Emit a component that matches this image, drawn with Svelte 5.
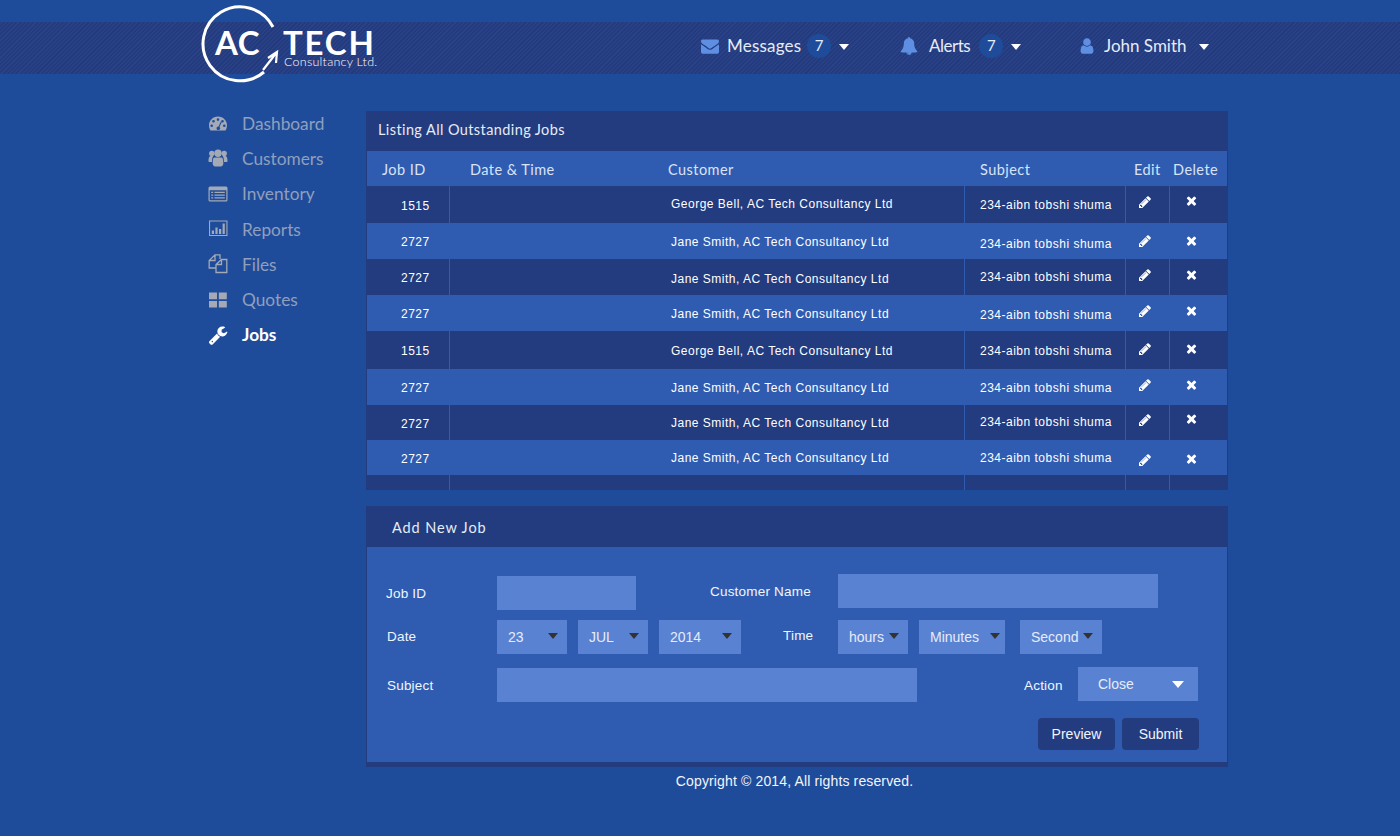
<script>
	const paths = {
		envelope: 'M1792 710v794q0 66-47 113t-113 47h-1472q-66 0-113-47t-47-113v-794q44 49 101 87 362 246 497 345 57 42 92.5 65.5t94.5 48 110 24.5h2q51 0 110-24.5t94.5-48 92.5-65.5q170-123 498-345 57-39 100-87zm0-294q0 79-49 151t-122 123q-376 261-468 325-10 7-42.5 30.5t-54 38-52 32.5-57.5 27-50 9h-2q-23 0-50-9t-57.5-27-52-32.5-54-38-42.5-30.5q-91-64-262-182.5t-205-142.5q-62-42-117-115.5t-55-136.5q0-78 41.5-130t118.5-52h1472q65 0 112.500 47t47.500 113z',
		bell: 'M912 1696q0-16-16-16-59 0-101.5-42.5t-42.500-101.500q0-16-16-16t-16 16q0 73 51.500 124.500t124.500 51.500q16 0 16-16zm816-288q0 52-38 90t-90 38h-448q0 106-75 181t-181 75-181-75-75-181h-448q-52 0-90-38t-38-90q50-42 91-88t85-119.500 74.500-158.500 50-206 19.500-260q0-152 117-282.500t307-158.500q-8-19-8-39 0-40 28-68t68-28 68 28 28 68q0 20-8 39 190 28 307 158.500t117 282.500q0 139 19.500 260t50 206 74.500 158.500 85 119.500 91 88z',
		user: 'M1536 1399q0 109-62.500 187t-150.500 78h-854q-88 0-150.500-78t-62.500-187q0-85 8.500-160.500t31.500-152 58.500-131 94-89 134.500-34.500q131 128 313 128t313-128q76 0 134.500 34.500t94 89 58.500 131 31.500 152 8.500 160.500zm-256-887q0 159-112.500 271.500t-271.500 112.500-271.500-112.500-112.500-271.500 112.500-271.500 271.500-112.500 271.500 112.500 112.500 271.500z',
		pencil: 'M491 1536l91-91-235-235-91 91v107h128v128h107zm523-928q0-22-22-22-10 0-17 7l-542 542q-7 7-7 17 0 22 22 22 10 0 17-7l542-542q7-7 7-17zm-54-192l416 416-832 832h-416v-416zm683 96q0 53-37 90l-166 166-416-416 166-165q36-38 90-38 53 0 91 38l235 234q37 39 37 91z',
		times: 'M1298 1214q0 40-28 68l-136 136q-28 28-68 28t-68-28l-294-294-294 294q-28 28-68 28t-68-28l-136-136q-28-28-28-68t28-68l294-294-294-294q-28-28-28-68t28-68l136-136q28-28 68-28t68 28l294 294 294-294q28-28 68-28t68 28l136 136q28 28 28 68t-28 68l-294 294 294 294q28 28 28 68z',
		wrench: 'M448 1472q0-26-19-45t-45-19-45 19-19 45 19 45 45 19 45-19 19-45zm644-420l-682 682q-37 37-90 37-52 0-91-37l-106-108q-38-36-38-90 0-53 38-91l681-681q39 98 114.500 173.500t173.500 114.500zm634-435q0 39-23 106-47 134-164.500 217.500t-258.500 83.500q-185 0-316.500-131.500t-131.500-316.500 131.500-316.500 316.500-131.500q58 0 121.500 16.500t107.500 46.500q16 11 16 28t-16 28l-293 169v224l193 107q5-3 79-48.500t135.500-81 70.500-35.500q15 0 23.500 10t8.500 25z'
	};

	const nav = [
		{ name: 'Dashboard', icon: 'dash' },
		{ name: 'Customers', icon: 'users' },
		{ name: 'Inventory', icon: 'list' },
		{ name: 'Reports', icon: 'chart' },
		{ name: 'Files', icon: 'files' },
		{ name: 'Quotes', icon: 'grid' },
		{ name: 'Jobs', icon: 'wrench', active: true }
	];

	const george = 'George Bell, AC Tech Consultancy Ltd';
	const jane = 'Jane Smith, AC Tech Consultancy Ltd';

	// c, s, i: how far the customer, subject and icons sit off the row's centre
	const jobs = [
		{ id: 1515, customer: george, h: 37, c: -1, s: 0, i: 0 },
		{ id: 2727, customer: jane, h: 36, c: 1, s: 3, i: 3 },
		{ id: 2727, customer: jane, h: 36, c: 2, s: 0, i: 1 },
		{ id: 2727, customer: jane, h: 36, c: 1, s: 2, i: 1 },
		{ id: 1515, customer: george, h: 38, c: 1, s: 1, i: 2 },
		{ id: 2727, customer: jane, h: 36, c: 1, s: 1, i: 1 },
		{ id: 2727, customer: jane, h: 35, c: 0, s: -1, i: 0 },
		{ id: 2727, customer: jane, h: 35, c: 0, s: 0, i: 5 }
	];

	const nudge = (n) => (n > 0 ? `padding-top: ${n * 2}px` : `padding-bottom: ${-n * 2}px`);
</script>

<div class="page">
	<header class="topbar">
		<div class="topbar-inner">
			<svg class="logo" viewBox="0 0 180 84" aria-label="AC Tech Consultancy Ltd.">
				<path d="M73 23 A37 37 0 1 0 64 68" fill="none" stroke="#fff" stroke-width="3" />
				<path d="M63 66 L77 48 M68 54 L77 48 L76 59" fill="none" stroke="#fff" stroke-width="2.200" />
				<text x="15" y="51" class="logo-big">AC</text>
				<text x="83" y="51" class="logo-big tech">TECH</text>
				<text x="84" y="62" class="logo-small">Consultancy Ltd.</text>
			</svg>
			<div class="usernav">
				<div class="navitem messages">
					<svg class="topicon" viewBox="0 0 1792 1792"><path d={paths.envelope} /></svg>
					<span class="navlabel">Messages</span>
					<span class="badge">7</span>
					<span class="caret"></span>
				</div>
				<div class="navitem alerts">
					<svg class="topicon" viewBox="0 0 1792 1792"><path d={paths.bell} /></svg>
					<span class="navlabel">Alerts</span>
					<span class="badge">7</span>
					<span class="caret"></span>
				</div>
				<div class="navitem profile">
					<svg class="topicon" viewBox="200 0 1392 1792"><path d={paths.user} /></svg>
					<span class="navlabel">John Smith</span>
					<span class="caret"></span>
				</div>
			</div>
		</div>
	</header>

	<div class="content">
		<nav class="sidebar">
			{#each nav as item}
				<div class="sidelink" class:active={item.active}>
					<svg class="sideicon" viewBox="0 0 20 20">
						{#if item.icon === 'dash'}
							<path fill-rule="evenodd" d="M10 2.500C4.800 2.500 1 6.600 1 11.300c0 2.200.7 3.900 1.500 5.200h15c.8-1.300 1.500-3 1.500-5.200 0-4.700-3.800-8.800-9-8.800zM10 4.300a1.300 1.300 0 1 1 0 2.600 1.300 1.300 0 0 1 0-2.600zM5.500 6a1.300 1.300 0 1 1 0 2.600 1.300 1.300 0 0 1 0-2.600zM14.500 6a1.300 1.300 0 1 1 0 2.600 1.300 1.300 0 0 1 0-2.600zM3.700 10.400a1.300 1.300 0 1 1 0 2.600 1.300 1.300 0 0 1 0-2.600zM16.300 10.400a1.300 1.300 0 1 1 0 2.600 1.300 1.300 0 0 1 0-2.600zM12.800 7.500l.9.4-2.200 5a1.800 1.800 0 1 1-.9-.4z" />
						{:else if item.icon === 'users'}
							<circle cx="3.800" cy="4.500" r="2.700" /><circle cx="16.200" cy="4.500" r="2.700" /><circle cx="10" cy="4.200" r="3.700" />
							<path d="M.5 12c0-3 .6-4.800 2-5h2.800C4.300 8.500 4 10.500 4 13H1.200C.8 13 .5 12.500.5 12zM19.500 12c0-3-.6-4.800-2-5h-2.800c1 1.500 1.300 3.500 1.300 6h2.800c.4 0 .7-.5.700-1z" />
							<path d="M6.500 8.500h7c1.500 0 1.800 3 1.800 6 0 1.500-1 3-2.500 3H7.200c-1.500 0-2.500-1.500-2.500-3 0-3 .3-6 1.800-6z" />
						{:else if item.icon === 'list'}
							<path fill-rule="evenodd" d="M2 2.500h16a1.500 1.500 0 0 1 1.500 1.500v12A1.500 1.500 0 0 1 18 17.500H2A1.500 1.500 0 0 1 .5 16V4A1.500 1.500 0 0 1 2 2.500zm-.3 3.800v9.700c0 .2.100.3.300.3h16c.2 0 .3-.1.300-.3V6.300zM3.200 7.800h2v1.300h-2zM6.500 7.800h10.300v1.300H6.500zM3.200 10.500h2v1.300h-2zM6.500 10.500h10.300v1.300H6.500zM3.200 13.200h2v1.300h-2zM6.500 13.200h10.300v1.300H6.500z" />
						{:else if item.icon === 'chart'}
							<path fill-rule="evenodd" d="M1 1.500h18.500v15.500H1zM2.100 2.600v13.300h16.300V2.600zM3.800 11.500h2.200v3.600H3.800zM7.400 8.500h2.200v6.600H7.400zM11 10h2.200v5.100H11zM14.600 4.500h2.200v10.600h-2.200z" />
						{:else if item.icon === 'files'}
							<path fill="none" stroke="currentColor" stroke-width="1.300" d="M12 5V.8H7L1.200 6.500V14H7.500M7 .8V6.500H1.200M13.500 5.500H18.800V18.500H8V10.500zM13.500 5.500V10.500H8" />
						{:else if item.icon === 'grid'}
							<path d="M1 2.500h8v6.800H1zM10.800 2.500h8v6.800h-8zM1 11h8v6.500H1zM10.800 11h8v6.500h-8z" />
						{:else}
							<path transform="scale(.0112)" d={paths.wrench} />
						{/if}
					</svg>
					<span>{item.name}</span>
				</div>
			{/each}
		</nav>

		<main class="main">
			<section class="panel list-panel">
				<h2 class="panel-title">Listing All Outstanding Jobs</h2>
				<div class="grid head">
					<span class="th job">Job ID</span>
					<span class="th date">Date &amp; Time</span>
					<span class="th cust">Customer</span>
					<span class="th subj">Subject</span>
					<span class="th edit">Edit</span>
					<span class="th del">Delete</span>
				</div>
				{#each jobs as job, i}
					<div class="grid row" class:light={i % 2 === 1} style="height: {job.h}px">
						<span class="td id">{job.id}</span>
						<span class="td date-cell"></span>
						<span class="td customer" style={nudge(job.c)}>{job.customer}</span>
						<span class="td subject" style={nudge(job.s)}>234-aibn tobshi shuma</span>
						<span class="td action edit-cell" style={nudge(job.i - 3)}>
							<svg class="rowicon" viewBox="0 0 1792 1792"><path d={paths.pencil} /></svg>
						</span>
						<span class="td action del-cell" style={nudge(job.i - 3)}>
							<svg class="rowicon" viewBox="0 200 1408 1408"><path d={paths.times} /></svg>
						</span>
					</div>
				{/each}
				<div class="grid row tail">
					<span class="td"></span><span class="td date-cell"></span><span class="td"></span>
					<span class="td"></span><span class="td"></span><span class="td"></span>
				</div>
			</section>

			<section class="panel form-panel">
				<h2 class="panel-title add">Add New Job</h2>
				<form class="form" onsubmit={(e) => e.preventDefault()}>
					<div class="frow one">
						<span class="lbl l-job">Job ID</span>
						<span class="field f-job"></span>
						<span class="lbl l-customer">Customer Name</span>
						<span class="field f-customer"></span>
					</div>
					<div class="frow two">
						<span class="lbl l-date">Date</span>
						<span class="field sel w70">23<i class="arrow"></i></span>
						<span class="field sel w70 gap11">JUL<i class="arrow"></i></span>
						<span class="field sel w82 gap11">2014<i class="arrow"></i></span>
						<span class="lbl l-time">Time</span>
						<span class="field sel w70">hours<i class="arrow"></i></span>
						<span class="field sel w86 gap11">Minutes<i class="arrow near"></i></span>
						<span class="field sel w82 gap15">Second<i class="arrow"></i></span>
					</div>
					<div class="frow three">
						<span class="lbl l-subject">Subject</span>
						<span class="field f-subject"></span>
						<span class="lbl l-action">Action</span>
						<span class="field sel f-action">Close<i class="arrow white"></i></span>
					</div>
					<div class="buttons">
						<button type="button">Preview</button>
						<button type="submit">Submit</button>
					</div>
				</form>
			</section>

			<footer class="copyright">Copyright © 2014, All rights reserved.</footer>
		</main>
	</div>
</div>

<style>
	:global(body) {
		background: #1f4c9a;
		color: #fff;
	}

	.page {
		height: 836px;
		overflow: hidden;
		padding-top: 22px;
		box-sizing: border-box;
		font-family: 'Liberation Sans', Arial, sans-serif;
	}

	.topbar {
		height: 52px;
		background: repeating-linear-gradient(-45deg, #233a7c 0, #233a7c 1.5px, #294186 1.5px, #294186 3px);
	}

	.topbar-inner {
		position: relative;
		height: 100%;
	}

	.logo {
		position: absolute;
		left: 200px;
		top: -18px;
		width: 180px;
		height: 84px;
	}

	.logo-big {
		font-family: Lato, sans-serif;
		font-weight: 700;
		font-size: 33px;
		letter-spacing: 0.5px;
		fill: #fff;
	}

	.logo-big.tech { letter-spacing: 1.8px; }

	.logo-small {
		font-family: Lato, sans-serif;
		font-size: 12.500px;
		font-weight: 300;
		letter-spacing: 0.25px;
		fill: #fff;
	}

	.usernav {
		display: flex;
		box-sizing: border-box;
		height: 100%;
		padding: 0 0 5px 701px;
		font-family: Lato, sans-serif;
	}

	.navitem {
		display: flex;
		align-items: center;
		font-size: 17px;
		color: #e6ecf8;
	}

	.messages { width: 199px; letter-spacing: 0.2px; }
	.alerts { width: 180px; letter-spacing: -0.5px; }

	.topicon {
		fill: #5f8fe3;
		width: 18px;
		height: 18px;
		margin-right: 8px;
		flex: none;
	}

	.alerts .topicon { margin-right: 11px; }
	.profile .topicon { width: 14px; margin-right: 10px; }

	.badge {
		width: 24px;
		height: 24px;
		margin-left: 6px;
		border-radius: 50%;
		background: #1f4c9a;
		font-size: 15px;
		text-align: center;
		line-height: 23px;
	}

	.alerts .badge { margin-left: 9px; }

	.caret {
		width: 0;
		height: 0;
		margin: 3px 0 0 8px;
		border-left: 5px solid transparent;
		border-right: 5px solid transparent;
		border-top: 6px solid #fff;
	}

	.profile .caret { margin-left: 12px; }

	.content {
		display: flex;
		padding: 32px 0 0 208px;
	}

	.sidebar {
		width: 158px;
		font-family: Lato, sans-serif;
		font-size: 17.300px;
		color: #8f9fbd;
	}

	.sidelink {
		display: flex;
		align-items: center;
		height: 35.200px;
	}

	.sidelink.active {
		color: #fff;
		font-weight: 700;
	}

	.sideicon {
		width: 20px;
		height: 20px;
		margin-right: 14px;
		fill: #a3a9b5;
		color: #a3a9b5;
		flex: none;
	}

	.active .sideicon { fill: #fff; }

	.main {
		width: 862px;
		margin-top: 5px;
	}

	.panel {
		box-sizing: border-box;
		background: #233b7f;
		border-left: 1px solid #233b7f;
		border-right: 1px solid #233b7f;
	}

	.panel-title {
		margin: 0;
		padding-left: 11px;
		height: 40px;
		font-family: Lato, sans-serif;
		font-size: 14.500px;
		font-weight: 400;
		line-height: 38px;
		color: #e6ecf8;
		letter-spacing: 0.4px;
	}

	.panel-title.add {
		padding-left: 25px;
		height: 41px;
		line-height: 44px;
		letter-spacing: 0.9px;
	}

	.grid {
		display: grid;
		grid-template-columns: 83px 215px 300px 161px 44px 57px;
	}

	.head {
		height: 35px;
		padding-top: 2px;
		box-sizing: border-box;
		background: #2f5cb1;
		align-items: center;
		font-family: Lato, sans-serif;
		font-size: 14.500px;
		letter-spacing: 0.45px;
		color: #d9e3f5;
	}

	.th.job { padding-left: 15px; }
	.th.date { padding-left: 20px; }
	.th.cust { padding-left: 3px; }
	.th.subj { padding-left: 15px; }
	.th.edit { padding-left: 8px; }
	.th.del { padding-left: 3px; }

	.row { background: #233b7f; }
	.row.light { background: #2f5cb1; }

	.td {
		display: flex;
		align-items: center;
		box-sizing: border-box;
		font-size: 12px;
		letter-spacing: 0.5px;
		border-right: 1px solid #2f5cb1;
	}

	.row.light .td { border-right-color: transparent; }
	.td.date-cell, .td:last-child { border-right: none; }

	.id { padding: 2px 0 0 34px; }
	.customer { padding-left: 6px; }
	.subject { padding-left: 15px; }
	.action { justify-content: center; }
	.edit-cell { padding-right: 6px; }
	.del-cell { padding-right: 14px; }

	.rowicon {
		width: 14px;
		height: 14px;
		fill: #fff;
	}

	.del-cell .rowicon {
		width: 11px;
		height: 11px;
	}

	.row.tail { height: 15px; }

	.form-panel {
		margin-top: 16px;
		border-bottom: 5px solid #233b7f;
	}

	.form {
		height: 215px;
		box-sizing: border-box;
		padding-top: 27px;
		background: #2f5cb1;
		font-size: 13.500px;
	}

	.frow {
		display: flex;
		align-items: center;
		height: 34px;
		margin-bottom: 12px;
	}

	.frow.two { margin-bottom: 13px; }
	.frow.three { margin-bottom: 17px; }

	.lbl {
		color: #f1f5fc;
		white-space: nowrap;
		letter-spacing: 0.2px;
	}

	.field {
		display: block;
		box-sizing: border-box;
		height: 34px;
		background: #5a82d2;
		color: #e6ecf8;
	}

	.l-job { margin-left: 19px; width: 111px; padding-top: 4px; }
	.f-job { width: 139px; margin-top: 4px; }
	.l-customer { margin-left: 74px; width: 128px; padding-top: 1px; }
	.f-customer { width: 320px; }

	.l-date { margin-left: 20px; width: 110px; padding-bottom: 2px; }
	.l-time { margin-left: 42px; width: 55px; padding-bottom: 4px; }
	.l-subject { margin-left: 20px; width: 110px; padding-top: 2px; }
	.f-subject { width: 420px; margin-top: 2px; }
	.l-action { margin-left: 107px; width: 54px; padding-top: 2px; }

	.sel {
		position: relative;
		padding-left: 11px;
		line-height: 34px;
		font-size: 14px;
	}

	.w70 { width: 70px; }
	.w82 { width: 82px; }
	.w86 { width: 86px; }
	.gap11 { margin-left: 11px; }
	.gap15 { margin-left: 15px; }
	.f-action { width: 120px; padding-left: 20px; }

	.arrow {
		position: absolute;
		right: 9px;
		top: 13px;
		width: 0;
		height: 0;
		border-left: 5px solid transparent;
		border-right: 5px solid transparent;
		border-top: 6px solid #333;
	}

	.arrow.near { right: 5px; }

	.arrow.white {
		right: 14px;
		top: 14px;
		border-left-width: 6px;
		border-right-width: 6px;
		border-top: 7px solid #fff;
	}

	.buttons {
		display: flex;
		justify-content: flex-end;
		gap: 7px;
		padding-right: 28px;
	}

	button {
		width: 77px;
		height: 32px;
		padding: 0;
		border: none;
		border-radius: 4px;
		background: #233b7f;
		color: #f1f5fc;
		font-family: 'Liberation Sans', Arial, sans-serif;
		font-size: 14px;
	}

	.copyright {
		margin-top: 6px;
		padding-right: 5px;
		text-align: center;
		font-size: 14px;
		letter-spacing: 0.14px;
		color: #f1f5fc;
	}
</style>
